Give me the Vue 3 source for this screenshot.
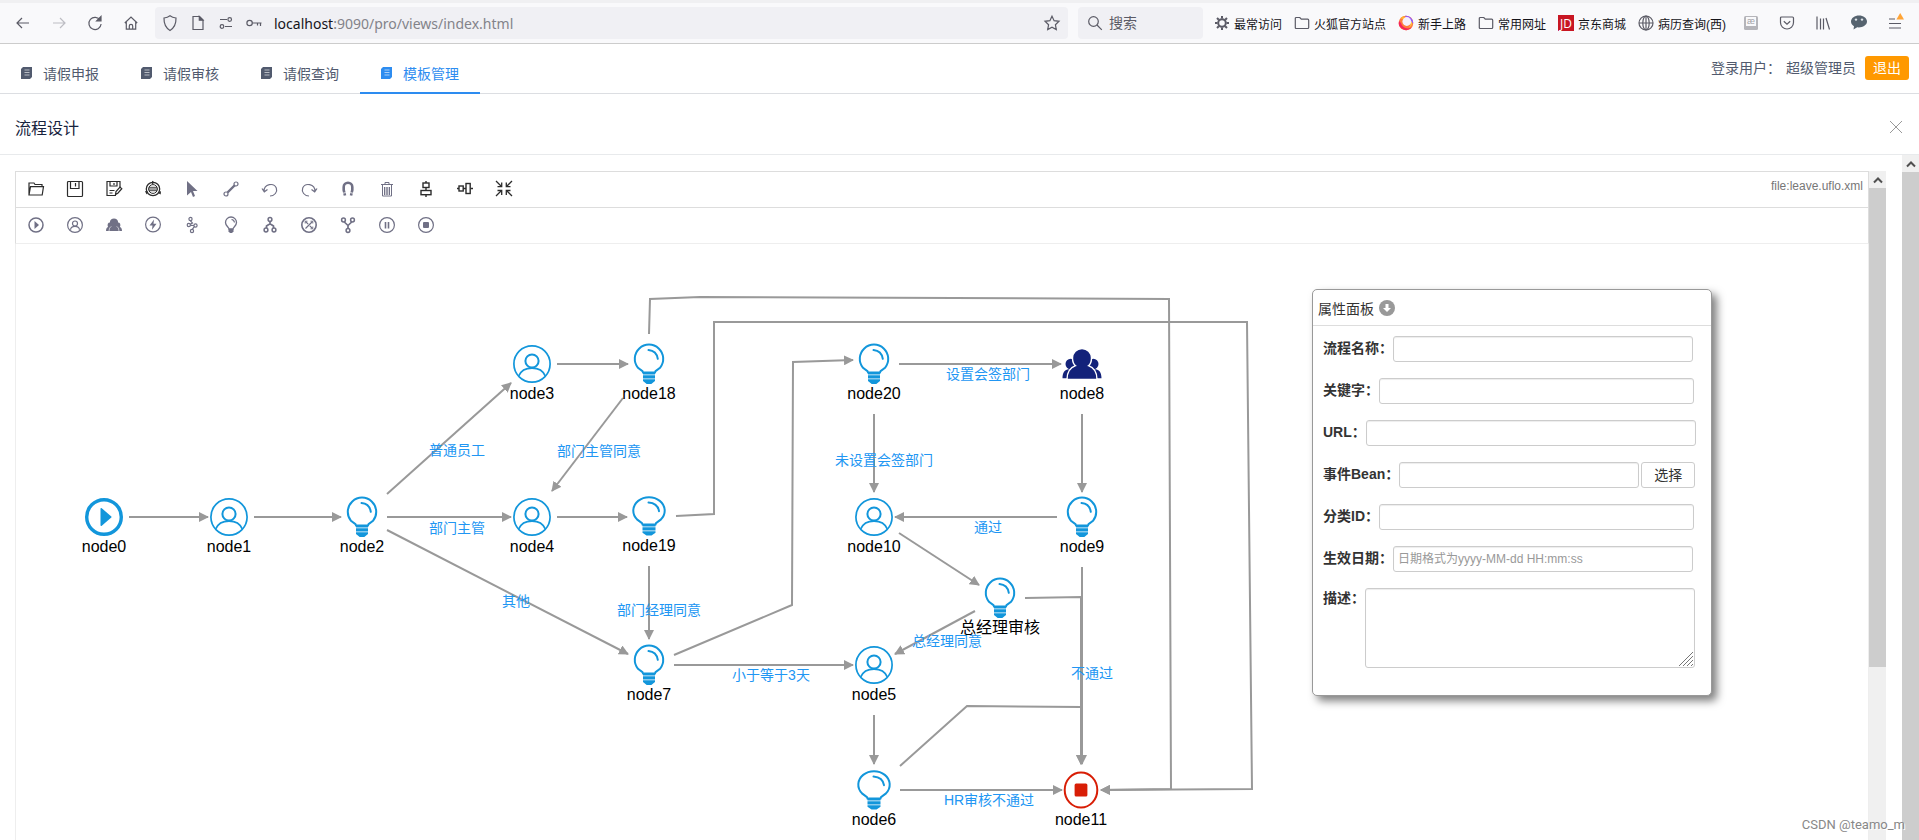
<script setup>
import { ref } from 'vue'

const chromeIcons = {
  back: '<path d="M14 8H2M7 3L2 8l5 5"/>',
  forward: '<path d="M2 8h12M9 3l5 5-5 5"/>',
  reload: '<path d="M13.2 5.2A6.1 6.1 0 1 0 14.1 9"/><path d="M14 1.5v4.3H9.7z" fill="currentColor"/>',
  home: '<path d="M1.8 8L8 2l6.2 6M3.3 7v7.2h9.4V7M6.3 14v-3a1.7 1.7 0 0 1 3.4 0v3"/>',
  shield: '<path d="M8 .8C6.2 2.2 4.200 2.800 2 3 1.800 9.500 4 13 8 15.500c4-2.500 6.200-6 6-12.500C11.800 2.800 9.800 2.200 8 .8z"/>',
  page: '<path d="M3 1.500h6.500L13 5v9.500H3z"/><path d="M9.300 1.500v3.700H13z" fill="currentColor"/>',
  perms: '<path d="M2 4.500h7M7 11.500h7"/><circle cx="11.700" cy="4.500" r="1.800"/><circle cx="4" cy="11.500" r="1.800"/>',
  key: '<circle cx="3.600" cy="8" r="2.700"/><path d="M6.300 8H15.500M14.500 8v3M11.500 8v2.500"/>',
  star: '<path d="M8 1.200l2.100 4.500 4.900.6-3.600 3.400.9 4.900L8 12.200l-4.300 2.400.9-4.900L1 6.300l4.900-.6z"/>',
  search: '<circle cx="6.500" cy="6.500" r="4.800"/><path d="M10 10l4.800 4.800"/>',
}

const bookmarkIcons = {
  gear: '<circle cx="8" cy="8" r="3.800" stroke-width="2"/><path d="M8 1v2.500M8 12.500V15M1 8h2.500M12.500 8H15M3 3l1.800 1.800M11.200 11.200L13 13M13 3l-1.800 1.800M4.800 11.200L3 13" stroke-width="2"/>',
  folder: '<path d="M1.300 12.500v-9q0-1 1-1h3.500l1.500 1.700h6.400q1 0 1 1v7.300q0 1-1 1H2.300q-1 0-1-1z"/>',
  firefox: '<circle cx="8" cy="8" r="7.300" fill="#ff7a3d" stroke="none"/><path d="M1 6a7.300 7.300 0 0 0 13 6A7 7 0 0 1 3 8z" fill="#f5245c" stroke="none"/><path d="M2.500 3.200a8 8 0 0 1 4-2.200L6 5z" fill="#ffb52e" stroke="none"/><path d="M7 .8a7.300 7.300 0 0 1 8.200 7.200L12 8.500z" fill="#9059ff" stroke="none"/><path d="M14 6.500a6 6 0 0 1-4 6.500 5 5 0 0 0 2-6z" fill="#ffc740" stroke="none"/><circle cx="8.800" cy="6.500" r="4.400" fill="#f6effb" stroke="none"/>',
  jd: '<rect width="16" height="16" fill="#c81623" stroke="none"/><text x="8" y="12.500" text-anchor="middle" font-size="12" font-family="Open Sans, sans-serif" fill="#fff" stroke="none">JD</text>',
  globe: '<circle cx="8" cy="8" r="7"/><ellipse cx="8" cy="8" rx="3.200" ry="7"/><path d="M1 8h14M8 1v14"/>',
}

const bookmarks = [
  { icon: 'gear', label: '最常访问' },
  { icon: 'folder', label: '火狐官方站点' },
  { icon: 'firefox', label: '新手上路' },
  { icon: 'folder', label: '常用网址' },
  { icon: 'jd', label: '京东商城' },
  { icon: 'globe', label: '病历查询(西)' },
]

const extensions = [
  { name: '阅读', svg: '<rect x="1" y="1" width="14" height="14" rx="1.500" fill="#b5b5ba" stroke="none"/><rect x="3" y="2" width="10" height="9" fill="#f9f9fb" stroke="none"/><text x="8" y="9" text-anchor="middle" font-size="9" fill="#a5a5aa" stroke="none" font-family="Liberation Sans, sans-serif">æ</text>' },
  { name: 'Pocket', svg: '<path d="M1.500 3q0-1 1-1h11q1 0 1 1v4.500a6.500 6.500 0 0 1-13 0z"/><path d="M4.800 6.300L8 9.300l3.200-3"/>' },
  { name: '书签库', svg: '<path d="M2 1.500v13M5.500 3.500v11M8.500 3.500v11M11 3l3.500 11.500"/>' },
  { name: '微信', svg: '<path d="M8 .5C3.800.5 0 3 0 6.600c0 2 1.200 3.700 3 4.700L2.500 14.500l3.700-2.200c4.800.6 9.800-1.800 9.800-5.700C16 3 12.200.5 8 .5z" fill="#56636f" stroke="none"/><circle cx="5" cy="4.600" r="1.200" fill="#dfe5ea" stroke="none"/><circle cx="11" cy="4.600" r="1.200" fill="#dfe5ea" stroke="none"/>' },
  { name: '菜单', svg: '<path d="M2 4h6M2 8.500h12M2 13h12"/><path d="M13.200-2L17 4.500H9.400z" fill="#ffa436" stroke="none"/>' },
]

const tabs = ['请假申报', '请假审核', '请假查询', '模板管理']
const activeTab = ref('模板管理')

const tools = [
  { name: '打开', dark: true, svg: '<path d="M1 14V2h5l1 1.500h7v2.200M1 14L2.500 5.700H15.500L14.200 14z"/>' },
  { name: '保存', dark: true, svg: '<rect x=".5" y=".5" width="15" height="15" rx="1"/><path d="M3.500.5v7h8.500v-7M8.500 2v3.500"/>' },
  { name: '另存为', dark: true, svg: '<path d="M14 6V.5H1v14h9M4 .5v4.500h7V.5M8 2v2M3.500 9.500h5M3.500 12h3"/><path d="M9.500 13.500l.5-3 4-4.500 1.800 1.700-4 4.500z"/>' },
  { name: '版本', dark: true, svg: '<circle cx="8" cy="8" r="6.700" stroke-width="1.300"/><circle cx="8" cy="8" r="4.400" stroke-width="1"/><path d="M4 6.300h8M4 9.700h8M3.600 8h8.800" stroke-width=".9"/><path d="M7-.2l3 1.700-3 1.700zM0 10l3 .5-1.500 3zM13 12l3-2-.3 3.500z" fill="currentColor" stroke="none"/>' },
  { name: '选择', svg: '<path d="M3 0l10.500 10H9l2 5-2 1-2-5-4 3.500z" fill="currentColor" stroke="none"/>' },
  { name: '连线', svg: '<circle cx="13" cy="3" r="2"/><circle cx="3" cy="13" r="2"/><path d="M4.500 11.500l7-7" stroke-width="2.400"/>' },
  { name: '撤销', svg: '<path d="M2 10.500C2 2.500 12 1.500 14.300 7c1.500 4-1.800 8-6.300 8M0 7.500l2.300 3.300L5.500 8.500"/>' },
  { name: '重做', svg: '<path d="M14 10.500C14 2.500 4 1.500 1.700 7c-1.500 4 1.800 8 6.300 8M16 7.500l-2.300 3.300-3.200-2.300"/>' },
  { name: '吸附', svg: '<path d="M5 14.500L3.700 9V6a4.300 4.300 0 0 1 8.600 0v3L11 14.500" stroke-width="2.600"/><path d="M3 12.200l2.800-.6M13 12.200l-2.800-.6" stroke="#fff" stroke-width=".8"/>' },
  { name: '删除', svg: '<path d="M2 3.500h12M6 3V1.500h4V3M3.500 4v11h9V4M5.500 6v8M7.200 6v8M8.800 6v8M10.500 6v8" stroke-width="1"/>' },
  { name: '垂直对齐', dark: true, svg: '<path d="M8 0v2M8 6.500v3M8 14v2" stroke-width="1.400"/><rect x="5" y="2" width="6" height="4.500" stroke-width="1.400"/><rect x="3" y="9.500" width="10" height="4.200" stroke-width="1.400"/>' },
  { name: '水平对齐', dark: true, svg: '<path d="M0 7.500h2M6 7.500h3M13.500 7.500h2.500" stroke-width="1.400"/><rect x="2" y="5" width="4.200" height="5" stroke-width="1.400"/><rect x="9" y="2.500" width="4.200" height="10" stroke-width="1.400"/>' },
  { name: '适应画布', dark: true, svg: '<path d="M0 0l5.500 5.500M16 0l-5.500 5.500M0 15l5.500-5.500M16 15l-5.500-5.500" stroke-width="1.300"/><path d="M1.500 5.700h4.200V1.500M14.500 5.700h-4.200V1.500M1.500 9.500h4.200V14M14.500 9.500h-4.200V14" stroke-width="1.300"/>' },
]

const palette = [
  { name: '开始', svg: '<circle cx="8" cy="8" r="7" stroke-width="1.500"/><path d="M6.500 4l4.500 4-4.500 4z" fill="currentColor" stroke="none"/>' },
  { name: '人工任务', svg: '<circle cx="8" cy="8" r="7.400"/><circle cx="8" cy="6.500" r="2.500"/><path d="M3.500 12.800C4 8.300 12 8.300 12.500 12.800"/>' },
  { name: '会签任务', svg: '<path d="M0 14c0-2.500.8-3.500 2-4C1 7.500 2 5.500 3.900 5.500 3.500 0 12.500 0 12.100 5.500 14 5.500 15 7.500 14 10c1.200.5 2 1.500 2 4z" fill="currentColor" stroke="none"/><path d="M3 14q0-3.500 2.300-4.700M13 14q0-3.500-2.300-4.700" stroke="#fff" stroke-width=".6"/>' },
  { name: '动作', svg: '<circle cx="8" cy="7.500" r="7.400"/><path d="M9 2.500L4.500 8.500h3L7 12.800l4.500-6h-3z" fill="currentColor" stroke="none"/>' },
  { name: '路由', svg: '<circle cx="6.500" cy="2" r="1.600"/><circle cx="4.800" cy="8" r="1.600"/><circle cx="11.500" cy="8.500" r="1.600"/><circle cx="8" cy="14" r="1.600"/><path d="M6.300 3.700L8.500 6 6.200 7.300M6.400 8.300l3.500.2M10.300 9.700L8.300 12.300"/>' },
  { name: '决策', svg: '<path d="M6 12c-.3-2-3.500-3-3.500-6.500a5.500 5.500 0 0 1 11 0C13.500 9 10.300 10 10 12z" stroke-width="1.300"/><path d="M8.500 2.500q2.500.2 3 3"/><path d="M5.500 12h5v2.500L9 16H7l-1.500-1.500z" fill="currentColor" stroke="none"/>' },
  { name: '分支', svg: '<circle cx="8" cy="2.500" r="1.900" stroke-width="1.500"/><circle cx="4" cy="13" r="1.900" stroke-width="1.500"/><circle cx="12" cy="13" r="1.900" stroke-width="1.500"/><path d="M8 4.500v2.300L4.500 9v2M8 6.800L11.500 9v2" stroke-width="1.700"/>' },
  { name: '聚合', svg: '<circle cx="8" cy="8" r="7.200" stroke-width="1.600"/><path d="M4.500 4.500l2.700 2.700M11.500 4.500l-7 7M8.800 8.800l2.700 2.700" stroke-width="1.200"/><path d="M4.200 6.500V4.200h2.300M11.800 6.500V4.200H9.500M11.800 9.500v2.300H9.500" stroke-width=".9"/>' },
  { name: '汇合', svg: '<circle cx="3.500" cy="3" r="1.900" stroke-width="1.500"/><circle cx="12.500" cy="3" r="1.900" stroke-width="1.500"/><circle cx="8" cy="13.500" r="1.900" stroke-width="1.500"/><path d="M4.300 5L8 8.500v3M11.700 5L8 8.500" stroke-width="1.700"/>' },
  { name: '暂停', svg: '<circle cx="8" cy="8" r="7.400"/><path d="M6.500 5v6.500M9.500 5v6.500" stroke-width="1.600"/>' },
  { name: '结束', svg: '<circle cx="8" cy="8" r="7.400"/><rect x="5" y="5" width="6" height="6" rx="1" fill="currentColor" stroke="none"/>' },
]

// Glyphs are centred on the node's own origin.
const glyphs = {
  start: '<circle r="17.300" fill="none" stroke="#1296db" stroke-width="3.400"/><path d="M-3.500-8.200q.2-1.300 1.300-.5L7.300-.6q.6.600 0 1.200L-2.200 8.700q-1.100.8-1.300-.5z" fill="#1296db"/>',
  user: '<g fill="none" stroke="#1296db" stroke-width="1.700"><circle r="18.100"/><circle cy="-3" r="6.600" stroke-width="2"/><path d="M-13.300 12C-9 1.500 9 1.500 13.300 12"/></g>',
  bulb: '<g fill="none" stroke="#1296db" stroke-width="2"><path d="M-6 8.500L-6.500 7.200L-11 3.800A14.200 14.200 0 1 1 11 3.800L6.500 7.200L6 8.500z"/><path d="M-.5-14Q7.500-13.300 8.800-5.200" stroke-linecap="round"/></g><path d="M-6 8H6v2.500H-6zM-6 11.300H6v3.200H-6zM-6 15.300H6v1.700L2.300 20h-4.600L-6 17z" fill="#1296db"/>',
  bulbWide: '<g fill="none" stroke="#1296db" stroke-width="2"><path d="M-6.500 8.500L-7 7.200L-12 3.400A15.700 13.500 0 1 1 12 3.400L7 7.200L6.500 8.500z"/><path d="M-.5-13.500Q8.800-12.800 10-4.800" stroke-linecap="round"/></g><path d="M-6.500 8h13v2.500h-13zM-6.500 11.300h13v3.200h-13zM-6.500 15.300h13v1.500L2.500 19.500h-5L-6.500 16.800z" fill="#1296db"/>',
  people: '<g fill="#13227a"><circle cx="-11.300" cy="0" r="5.200"/><circle cx="11.300" cy="0" r="5.200"/><path d="M-19.500 14.200C-19.500 9-17.500 6-14 5.200L-10 5.500V14.200zM19.500 14.200C19.500 9 17.500 6 14 5.200L10 5.500V14.200z"/></g><path d="M-15 15.500C-15 8-11.500 3.500-6.500 1.700-8.500.2-9.500-3-9.500-6a9.500 9.500 0 0 1 19 0C9.500-3 8.500.2 6.500 1.700 11.500 3.500 15 8 15 15.500z" fill="#13227a" stroke="#fff" stroke-width="1.400"/>',
  end: '<ellipse rx="16.300" ry="17.600" fill="none" stroke="#d81e06" stroke-width="2"/><rect x="-6.400" y="-6.600" width="12.800" height="13.200" rx="1.500" fill="#d81e06"/>',
}

const nodes = [
  { label: 'node0', type: 'start', x: 88, y: 273 },
  { label: 'node1', type: 'user', x: 213, y: 273 },
  { label: 'node2', type: 'bulb', x: 346, y: 273 },
  { label: 'node3', type: 'user', x: 516, y: 120 },
  { label: 'node18', type: 'bulb', x: 633, y: 120 },
  { label: 'node4', type: 'user', x: 516, y: 273 },
  { label: 'node19', type: 'bulbWide', x: 633, y: 272 },
  { label: 'node20', type: 'bulb', x: 858, y: 120 },
  { label: 'node8', type: 'people', x: 1066, y: 120 },
  { label: 'node10', type: 'user', x: 858, y: 273 },
  { label: 'node9', type: 'bulb', x: 1066, y: 273 },
  { label: '总经理审核', type: 'bulb', x: 984, y: 354 },
  { label: 'node7', type: 'bulb', x: 633, y: 421 },
  { label: 'node5', type: 'user', x: 858, y: 421 },
  { label: 'node6', type: 'bulbWide', x: 858, y: 546 },
  { label: 'node11', type: 'end', x: 1065, y: 546 },
]

const edges = [
  '113,273 192,273',
  '238,273 325,273',
  '371,250 495,139',
  '371,273 495,273',
  '371,286 612,410',
  '541,120 612,120',
  '607,154 536,247',
  '541,273 611,273',
  '660,272 698,270 698,78 1231,78 1236,545 1085,546',
  '633,90 634,55 684,53 1153,55 1155,545 1085,546',
  '658,411 776,361 777,118 837,116',
  '883,120 1045,120',
  '858,170 858,248',
  '1066,170 1066,248',
  '1041,273 879,273',
  '883,289 963,341',
  '959,367 879,410',
  '633,322 633,395',
  '658,421 837,421',
  '858,471 858,520',
  '884,546 1046,546',
  '884,522 951,462 1065,463 1065,520',
  '1009,354 1065,353 1065,520',
  '1066,323 1066,520',
]

const edgeLabels = [
  { text: '普通员工', x: 441, y: 211 },
  { text: '部门主管', x: 441, y: 289 },
  { text: '其他', x: 500, y: 362 },
  { text: '部门主管同意', x: 583, y: 212 },
  { text: '设置会签部门', x: 972, y: 135 },
  { text: '未设置会签部门', x: 868, y: 221 },
  { text: '通过', x: 972, y: 288 },
  { text: '部门经理同意', x: 643, y: 371 },
  { text: '小于等于3天', x: 755, y: 436 },
  { text: '总经理同意', x: 931, y: 402 },
  { text: '不通过', x: 1076, y: 434 },
  { text: 'HR审核不通过', x: 973, y: 561 },
]

const fields = [
  { id: 'name', label: '流程名称：', size: 'medium' },
  { id: 'key', label: '关键字：', size: 'large' },
  { id: 'url', label: 'URL：', size: 'full' },
  { id: 'bean', label: '事件Bean：', size: 'small', pick: true },
  { id: 'category', label: '分类ID：', size: 'large' },
  { id: 'effect', label: '生效日期：', size: 'medium', placeholder: '日期格式为yyyy-MM-dd HH:mm:ss' },
]
</script>

<template>
  <div class="page">
    <header class="chrome">
      <div class="nav">
        <button
          v-for="n in ['back', 'forward', 'reload', 'home']"
          :key="n"
          class="icon-button"
          :class="{ faded: n === 'forward' }"
          :aria-label="n"
        >
          <svg class="icon" viewBox="0 0 16 16" v-html="chromeIcons[n]"></svg>
        </button>
      </div>
      <div class="address">
        <svg
          v-for="n in ['shield', 'page', 'perms', 'key']"
          :key="n"
          class="icon"
          viewBox="0 0 16 16"
          v-html="chromeIcons[n]"
        ></svg>
        <span class="url"><b>localhost</b>:9090/pro/views/index.html</span>
        <button class="icon-button" aria-label="收藏">
          <svg class="icon" viewBox="0 0 16 16" v-html="chromeIcons.star"></svg>
        </button>
      </div>
      <label class="search">
        <svg class="icon" viewBox="0 0 16 16" v-html="chromeIcons.search"></svg>
        <input type="text" placeholder="搜索" aria-label="搜索" />
      </label>
      <nav class="bookmarks">
        <a v-for="b in bookmarks" :key="b.label" href="#">
          <svg class="icon" viewBox="0 0 16 16" v-html="bookmarkIcons[b.icon]"></svg>
          <span>{{ b.label }}</span>
        </a>
      </nav>
      <div class="extensions">
        <button v-for="e in extensions" :key="e.name" class="icon-button" :aria-label="e.name">
          <svg class="icon" viewBox="0 0 16 16" v-html="e.svg"></svg>
        </button>
      </div>
    </header>

    <div class="app-bar">
      <nav class="tabs">
        <a
          v-for="t in tabs"
          :key="t"
          href="#"
          class="tab"
          :class="{ active: t === activeTab }"
          @click.prevent="activeTab = t"
        >
          <svg class="tab-icon" viewBox="0 0 14 14">
            <path d="M3 1h9v10l-2 2H1V3z" fill="currentColor" />
            <path d="M4.500 4h5M4.500 6.500h5M4.500 9h5" stroke="#fff" stroke-width=".6" />
          </svg>
          <span>{{ t }}</span>
        </a>
      </nav>
      <div class="account">
        <span>登录用户：</span>
        <span class="user">超级管理员</span>
        <button class="logout">退出</button>
      </div>
    </div>

    <div class="title-bar">
      <h1>流程设计</h1>
      <button class="icon-button close" aria-label="关闭">
        <svg viewBox="0 0 12 12"><path d="M0 0l12 12M12 0L0 12" /></svg>
      </button>
    </div>

    <main class="workspace">
      <section class="designer">
        <div class="toolbar">
          <button
            v-for="t in tools"
            :key="t.name"
            class="tool"
            :class="{ dark: t.dark }"
            :aria-label="t.name"
          >
            <svg class="icon" viewBox="0 0 16 16" v-html="t.svg"></svg>
          </button>
          <span class="file">file:leave.uflo.xml</span>
        </div>
        <div class="toolbar light">
          <button v-for="t in palette" :key="t.name" class="tool" :aria-label="t.name">
            <svg class="icon" viewBox="0 0 16 16" v-html="t.svg"></svg>
          </button>
        </div>
        <div class="canvas">
          <svg class="diagram">
            <defs>
              <marker
                id="arrow"
                markerUnits="userSpaceOnUse"
                markerWidth="10"
                markerHeight="10"
                refX="9"
                refY="5"
                orient="auto"
              >
                <path d="M0 0l10 5-10 5z" fill="#999" />
              </marker>
            </defs>
            <polyline v-for="e in edges" :key="e" :points="e" class="edge" marker-end="url(#arrow)" />
            <text v-for="l in edgeLabels" :key="l.text" :x="l.x" :y="l.y" class="edge-label">{{ l.text }}</text>
            <g v-for="n in nodes" :key="n.label" :transform="`translate(${n.x} ${n.y})`">
              <g v-html="glyphs[n.type]"></g>
              <text y="35" class="node-label">{{ n.label }}</text>
            </g>
          </svg>

          <aside class="panel">
            <h2>
              属性面板
              <svg viewBox="0 0 16 16">
                <circle cx="8" cy="8" r="8" fill="#999" />
                <path d="M6.500 4h3v4h2.500L8 12 4 8h2.500z" fill="#fff" />
              </svg>
            </h2>
            <form @submit.prevent>
              <div v-for="f in fields" :key="f.id" class="field">
                <label :for="f.id">{{ f.label }}</label>
                <input :id="f.id" type="text" :class="f.size" :placeholder="f.placeholder" />
                <button v-if="f.pick" type="button" class="pick">选择</button>
              </div>
              <div class="field top">
                <label for="desc">描述：</label>
                <div class="area">
                  <textarea id="desc" class="full"></textarea>
                  <svg viewBox="0 0 14 14"><path d="M0 14L14 0M4 14L14 4M8 14l6-6M12 14l2-2" /></svg>
                </div>
              </div>
            </form>
          </aside>
        </div>
      </section>
      <div class="scrollbar inner">
        <div class="cap"><svg viewBox="0 0 10 8"><path d="M1 6.500l4-4 4 4" /></svg></div>
        <div class="track"><div class="thumb partial"></div></div>
      </div>
      <div class="scrollbar">
        <div class="cap"><svg viewBox="0 0 10 8"><path d="M1 6.500l4-4 4 4" /></svg></div>
        <div class="track"><div class="thumb"></div></div>
      </div>
    </main>
    <div class="watermark">CSDN @teamo_m</div>
  </div>
</template>

<style>
body {
  margin: 0;
  overflow: hidden;
}
</style>

<style scoped>
.page {
  position: relative;
  display: flex;
  flex-direction: column;
  height: 100vh;
  overflow: hidden;
  background: #fff;
  font-family: "Liberation Sans", "Noto Sans CJK SC", sans-serif;
  font-size: 14px;
  color: #515a6e;
}
.page * {
  box-sizing: border-box;
}
button,
input,
textarea {
  font-family: inherit;
}
a {
  color: inherit;
  text-decoration: none;
}
.icon {
  display: block;
  flex: none;
  width: 16px;
  height: 16px;
  overflow: visible;
  fill: none;
  stroke: currentColor;
  stroke-width: 1.2;
}
.icon-button {
  display: block;
  padding: 0;
  border: 0;
  background: none;
  color: inherit;
}

.chrome {
  display: flex;
  flex: none;
  align-items: center;
  height: 44px;
  border-top: 3px solid #f0f0f2;
  border-bottom: 1px solid #ccc;
  background: #f9f9fb;
  color: #5b5b66;
}
.nav {
  display: flex;
  gap: 20px;
  padding: 0 16px 0 15px;
}
.faded {
  color: #bdbdc3;
}
.address {
  display: flex;
  flex: 1;
  gap: 12px;
  align-items: center;
  height: 32px;
  padding: 0 8px 0 7px;
  border-radius: 4px;
  background: #f0f0f4;
}
.url {
  flex: 1;
  font-family: "Noto Sans", sans-serif;
  font-size: 14px;
  color: #83838a;
}
.url b {
  font-weight: 400;
  color: #15141a;
}
.search {
  display: flex;
  gap: 6px;
  align-items: center;
  width: 125px;
  height: 32px;
  margin: 0 11px 0 10px;
  padding-left: 9px;
  border-radius: 4px;
  background: #f0f0f4;
}
.search input {
  width: 90px;
  padding: 0;
  border: 0;
  background: none;
  font-size: 14px;
}
.search input::placeholder {
  color: #5b5b66;
}
.bookmarks {
  display: flex;
  gap: 12px;
  font-size: 12px;
  white-space: nowrap;
}
.bookmarks a {
  display: flex;
  gap: 4px;
  align-items: center;
}
.bookmarks span {
  color: #15141a;
}
.extensions {
  display: flex;
  gap: 20px;
  padding: 0 16px 0 17px;
}

.app-bar {
  display: flex;
  flex: none;
  justify-content: space-between;
  height: 50px;
  border-bottom: 1px solid #dcdee2;
}
.tabs {
  display: flex;
  padding-top: 12px;
}
.tab {
  display: flex;
  gap: 9px;
  align-items: center;
  width: 120px;
  height: 38px;
  padding: 0 0 2px 20px;
  border-bottom: 2px solid transparent;
}
.tab-icon {
  width: 14px;
  height: 14px;
}
.tab.active {
  border-color: #2d8cf0;
  color: #2d8cf0;
}
.account {
  display: flex;
  align-items: center;
  height: 24px;
  margin: 12px 10px 0 0;
}
.account span {
  padding-bottom: 2px;
}
.user {
  margin: 0 9px 0 5px;
}
.logout {
  width: 44px;
  height: 24px;
  padding: 0;
  border: 0;
  border-radius: 3px;
  background: #f90;
  font-size: 14px;
  line-height: 24px;
  color: #fff;
}

.title-bar {
  display: flex;
  flex: none;
  justify-content: space-between;
  align-items: center;
  height: 61px;
  padding: 6px 17px 0 15px;
  border-bottom: 1px solid #e8eaec;
}
.title-bar h1 {
  margin: 0;
  font-size: 16px;
  font-weight: 400;
  color: #17233d;
}
.close svg {
  display: block;
  width: 12px;
  height: 12px;
  stroke: #999;
}

.workspace {
  display: flex;
  flex: 1;
  min-height: 0;
  padding-left: 15px;
}
.designer {
  display: flex;
  flex: 1;
  flex-direction: column;
  min-width: 0;
  margin-top: 16px;
  border-top: 1px solid #ddd;
}
.toolbar {
  display: flex;
  flex: none;
  align-items: center;
  height: 36px;
  padding-bottom: 2px;
  border: solid #ddd;
  border-width: 0 1px 1px;
  color: #707085;
}
.toolbar.light {
  border-bottom-color: #eee;
}
.tool {
  display: flex;
  justify-content: center;
  width: 39px;
  padding: 0;
  border: 0;
  background: none;
  color: inherit;
}
.tool.dark {
  color: #2c2c2c;
}
.file {
  align-self: flex-start;
  margin: 7px 5px 0 auto;
  font-size: 12px;
  color: #777;
}
.canvas {
  position: relative;
  flex: 1;
  min-height: 0;
  overflow: hidden;
  border: solid #eee;
  border-width: 0 1px;
}
.diagram {
  display: block;
  width: 100%;
  height: 100%;
}
.edge {
  fill: none;
  stroke: #999;
  stroke-width: 2;
}
.edge-label {
  font-size: 14px;
  text-anchor: middle;
  fill: #2196f3;
}
.node-label {
  font-size: 16px;
  text-anchor: middle;
  fill: #000;
}

.panel {
  position: absolute;
  top: 45px;
  left: 1296px;
  width: 400px;
  border: 1px solid #999;
  border-radius: 5px;
  background: #fff;
  box-shadow: 5px 5px 8px rgba(0, 0, 0, 0.5);
  color: #333;
}
.panel h2 {
  display: flex;
  gap: 5px;
  align-items: center;
  height: 36px;
  margin: 0;
  padding-left: 5px;
  border-bottom: 1px solid #ddd;
  font-size: 14px;
  font-weight: 400;
}
.panel h2 svg {
  width: 16px;
  height: 16px;
}
.panel form {
  display: flex;
  flex-direction: column;
  gap: 16px;
  padding: 10px 0 27px 10px;
}
.field {
  display: flex;
  align-items: center;
}
.field.top {
  align-items: flex-start;
}
.field label {
  padding-bottom: 2px;
  line-height: 20px;
  font-weight: 700;
  white-space: nowrap;
}
.field input,
.field textarea {
  display: block;
  height: 26px;
  padding: 4px;
  border: 1px solid #ccc;
  border-radius: 3px;
  background: #fff;
  box-shadow: inset 0 1px 1px rgba(0, 0, 0, 0.075);
  font-size: 12px;
}
.field textarea {
  height: 80px;
  resize: none;
}
.field input::placeholder {
  color: #999;
}
.field .small {
  width: 240px;
}
.field .medium {
  width: 300px;
}
.field .large {
  width: 315px;
}
.field .full {
  width: 330px;
}
.pick {
  width: 54px;
  height: 26px;
  margin-left: 2px;
  padding: 0;
  border: 1px solid #ccc;
  border-radius: 3px;
  background: #fff;
  font-size: 14px;
  line-height: 22px;
  color: #333;
}
.area {
  position: relative;
}
.area svg {
  position: absolute;
  right: 2px;
  bottom: 2px;
  width: 14px;
  height: 14px;
  stroke: #777;
}

.scrollbar {
  display: flex;
  flex: none;
  flex-direction: column;
  width: 17px;
  background: #f0f0f0;
}
.scrollbar.inner {
  margin: 16px 16px 0 0;
}
.cap {
  display: flex;
  flex: none;
  justify-content: center;
  align-items: center;
  height: 17px;
}
.cap svg {
  width: 10px;
  height: 8px;
  fill: none;
  stroke: #505050;
  stroke-width: 2;
}
.track {
  flex: 1;
}
.thumb {
  height: 100%;
  background: #cdcdcd;
}
.thumb.partial {
  height: 73.4%;
}
.watermark {
  position: absolute;
  right: 14px;
  bottom: 7px;
  font-family: Roboto, sans-serif;
  font-size: 13px;
  line-height: 16px;
  color: #888;
  text-shadow: 1px 1px 0 #fff;
}
</style>
